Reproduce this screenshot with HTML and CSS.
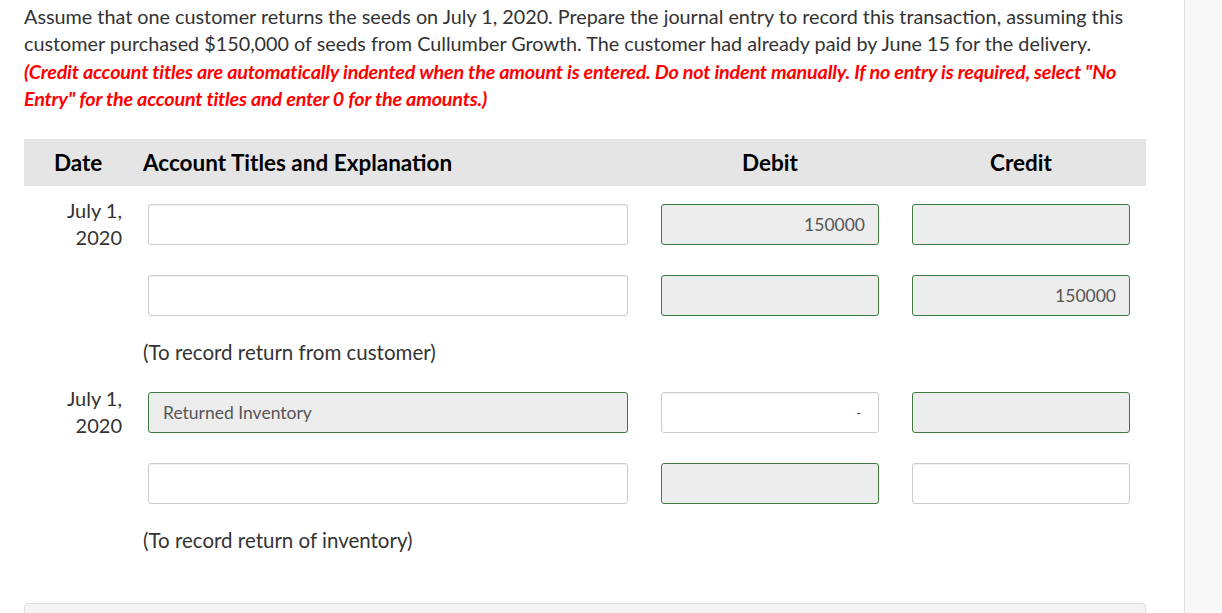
FILE: index.html
```html
<!DOCTYPE html>
<html lang="en">
<head>
  <meta charset="UTF-8">
  <title>Journal Entry</title>
  <link rel="stylesheet" href="styles.css">
</head>
<body>
  <div class="page">
    <main class="content">
      <p class="question">
        Assume that one customer returns the seeds on July 1, 2020. Prepare the journal entry to record this transaction, assuming this customer purchased $150,000 of seeds from Cullumber Growth. The customer had already paid by June 15 for the delivery.
        <em class="hint">(Credit account titles are automatically indented when the amount is entered. Do not indent manually. If no entry is required, select "No Entry" for the account titles and enter 0 for the amounts.)</em>
      </p>

      <div class="journal">
        <div class="journal-head">
          <div class="head-date">Date</div>
          <div class="head-account">Account Titles and Explanation</div>
          <div class="head-amount">Debit</div>
          <div class="head-amount">Credit</div>
        </div>

        <div class="journal-body">
          <div class="entry-row">
            <div class="date">July 1,<br>2020</div>
            <div class="cell"><input class="field account" type="text" value=""></div>
            <div class="cell"><input class="field amount filled" type="text" value="150000"></div>
            <div class="cell"><input class="field amount filled" type="text" value=""></div>
          </div>
          <div class="entry-row">
            <div class="date"></div>
            <div class="cell"><input class="field account" type="text" value=""></div>
            <div class="cell"><input class="field amount filled" type="text" value=""></div>
            <div class="cell"><input class="field amount filled" type="text" value="150000"></div>
          </div>
          <p class="memo">(To record return from customer)</p>

          <div class="entry-row">
            <div class="date">July 1,<br>2020</div>
            <div class="cell"><input class="field account filled" type="text" value="Returned Inventory"></div>
            <div class="cell"><input class="field amount dash" type="text" value="-"></div>
            <div class="cell"><input class="field amount filled" type="text" value=""></div>
          </div>
          <div class="entry-row">
            <div class="date"></div>
            <div class="cell"><input class="field account" type="text" value=""></div>
            <div class="cell"><input class="field amount filled" type="text" value=""></div>
            <div class="cell"><input class="field amount" type="text" value=""></div>
          </div>
          <p class="memo">(To record return of inventory)</p>
        </div>
      </div>

      <div class="next-panel"></div>
    </main>
    <aside class="sidebar"></aside>
  </div>
</body>
</html>
```

FILE: styles.css
```css
:root {
  --text: #333333;
  --hint: #ff0000;
  --head-bg: #e5e5e5;
  --field-border: #cccccc;
  --filled-border: #3f7a3f;
  --filled-bg: #ededed;
}

* {
  box-sizing: border-box;
}

body {
  margin: 0;
  font-family: Lato, "Open Sans", sans-serif;
  color: var(--text);
  background: #ffffff;
  overflow: hidden;
}

.page {
  display: flex;
  height: 613px;
}

.content {
  flex: 1;
  padding: 0 38px 0 24px;
  overflow: hidden;
}

.sidebar {
  width: 38px;
  background: #f8f8f8;
  border-left: 1px solid #dddddd;
}

.question {
  margin: 0;
  padding-top: 3px;
  font-size: 19.8px;
  line-height: 27.3px;
}

.hint {
  display: block;
  color: var(--hint);
  font-weight: 700;
  letter-spacing: -0.2px;
}

.journal {
  margin-top: 27px;
}

.journal-head {
  display: grid;
  grid-template-columns: 119px 518px 251px 234px;
  align-items: center;
  height: 47px;
  background: var(--head-bg);
  font-size: 22.5px;
  font-weight: 700;
  color: #000000;
}

.head-date {
  padding-left: 30px;
}

.head-amount {
  width: 218px;
  text-align: center;
}

.journal-body {
  padding-top: 18px;
}

.entry-row {
  display: grid;
  grid-template-columns: 124px 513px 251px 234px;
  height: 41px;
  margin-bottom: 29.5px;
}

.date {
  padding-right: 26px;
  text-align: right;
  font-size: 20px;
  line-height: 27px;
  margin-top: -7px;
}

.field {
  display: block;
  height: 41px;
  margin: 0;
  padding: 0 13px;
  border: 1px solid var(--field-border);
  border-radius: 3px;
  background: #ffffff;
  box-shadow: inset 0 1px 1px rgba(0, 0, 0, 0.06);
  font-family: Lato, "Open Sans", sans-serif;
  font-size: 17.5px;
  color: #555555;
  outline: none;
}

.account {
  width: 480px;
  padding-left: 14px;
}

.amount {
  width: 218px;
  text-align: right;
}

.filled {
  border-color: var(--filled-border);
  background: var(--filled-bg);
  box-shadow: none;
}

.dash {
  padding-right: 17px;
  font-size: 13px;
  color: #444444;
}

.memo {
  margin: -6.5px 0 26.5px 119px;
  font-size: 20.5px;
  line-height: 27px;
}

.next-panel {
  margin-top: 49px;
  height: 40px;
  border: 1px solid #dddddd;
  border-radius: 4px 4px 0 0;
  background: #f4f4f4;
}
```
